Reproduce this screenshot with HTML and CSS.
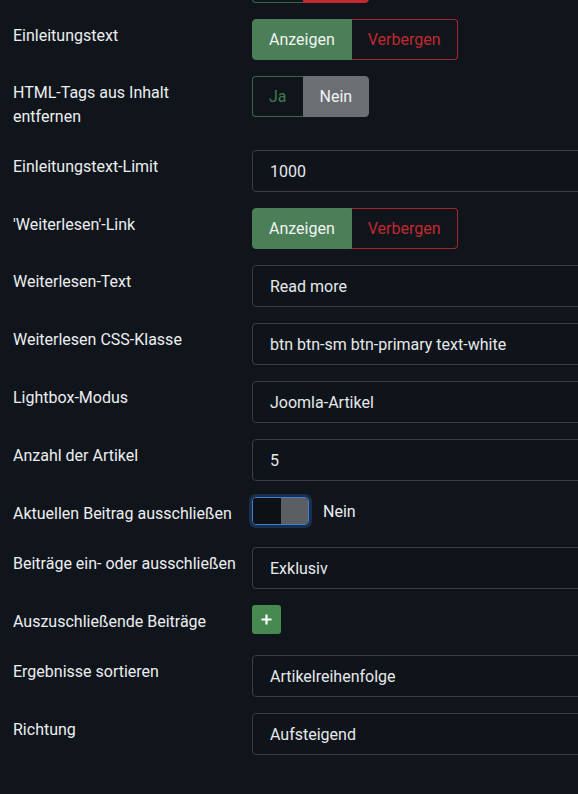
FILE: index.html
```html
<!DOCTYPE html>
<html lang="de">
<head>
<meta charset="utf-8">
<title>Optionen</title>
<link rel="stylesheet" href="styles.css">
</head>
<body>
<div class="form">
  <div class="row">
    <div class="lbl"></div>
    <div class="ctl">
      <div class="group">
        <span class="btn ja stub-ja"></span>
        <span class="btn nein-red stub-nein"></span>
      </div>
    </div>
  </div>
  <div class="row">
    <label class="lbl">Einleitungstext</label>
    <div class="ctl">
      <div class="group">
        <span class="btn show-on">Anzeigen</span>
        <span class="btn hide-off">Verbergen</span>
      </div>
    </div>
  </div>
  <div class="row">
    <label class="lbl">HTML-Tags aus Inhalt entfernen</label>
    <div class="ctl">
      <div class="group">
        <span class="btn ja">Ja</span>
        <span class="btn nein-grey">Nein</span>
      </div>
    </div>
  </div>
  <div class="row">
    <label class="lbl">Einleitungstext-Limit</label>
    <div class="ctl"><div class="input">1000</div></div>
  </div>
  <div class="row">
    <label class="lbl">'Weiterlesen'-Link</label>
    <div class="ctl">
      <div class="group">
        <span class="btn show-on">Anzeigen</span>
        <span class="btn hide-off">Verbergen</span>
      </div>
    </div>
  </div>
  <div class="row">
    <label class="lbl">Weiterlesen-Text</label>
    <div class="ctl"><div class="input">Read more</div></div>
  </div>
  <div class="row">
    <label class="lbl">Weiterlesen CSS-Klasse</label>
    <div class="ctl"><div class="input">btn btn-sm btn-primary text-white</div></div>
  </div>
  <div class="row">
    <label class="lbl">Lightbox-Modus</label>
    <div class="ctl"><div class="input">Joomla-Artikel</div></div>
  </div>
  <div class="row">
    <label class="lbl">Anzahl der Artikel</label>
    <div class="ctl"><div class="input">5</div></div>
  </div>
  <div class="row">
    <label class="lbl">Aktuellen Beitrag ausschließen</label>
    <div class="ctl switch-ctl">
      <span class="switch"><span class="sw-left"></span><span class="sw-right"></span></span>
      <span class="sw-text">Nein</span>
    </div>
  </div>
  <div class="row">
    <label class="lbl">Beiträge ein- oder ausschließen</label>
    <div class="ctl"><div class="input">Exklusiv</div></div>
  </div>
  <div class="row">
    <label class="lbl">Auszuschließende Beiträge</label>
    <div class="ctl">
      <span class="add">
        <svg width="13" height="13" viewBox="0 0 13 13"><path d="M6.5 1.5v10M1.5 6.5h10" stroke="#fff" stroke-width="2.2" fill="none"/></svg>
      </span>
    </div>
  </div>
  <div class="row">
    <label class="lbl">Ergebnisse sortieren</label>
    <div class="ctl"><div class="input">Artikelreihenfolge</div></div>
  </div>
  <div class="row">
    <label class="lbl">Richtung</label>
    <div class="ctl"><div class="input">Aufsteigend</div></div>
  </div>
</div>
</body>
</html>
```
FILE: styles.css
```css
html, body {
  margin: 0;
  padding: 0;
  background: #10151c;
  overflow: hidden;
}
body {
  font-family: Roboto, "Noto Sans", sans-serif;
  color: #e8eaed;
}
.form {
  width: 760px;
  margin-top: -38px;
  padding-left: 13px;
}
.row {
  display: grid;
  grid-template-columns: 239px 1fr;
  align-items: start;
  margin-bottom: 16px;
}
.lbl {
  font-size: 16px;
  line-height: 24px;
  padding: 5px 13px 5px 0;
  min-height: 24px;
  color: #eceef0;
}
.ctl {
  display: flex;
  align-items: flex-start;
}
.group {
  display: inline-flex;
  height: 41px;
}
.btn {
  display: flex;
  align-items: center;
  padding: 0 16px;
  font-size: 16px;
  box-sizing: border-box;
  height: 41px;
}
.group .btn:first-child { border-radius: 4px 0 0 4px; }
.group .btn:last-child { border-radius: 0 4px 4px 0; }
.stub-ja { width: 51px; }
.stub-nein { width: 66px; }
.ja {
  color: #3f7a4d;
  border: 1px solid #3d6447;
  border-right: 0;
}
.nein-grey {
  background: #6b6e72;
  color: #f2f3f4;
  border: 1px solid #6b6e72;
}
.nein-red {
  background: #c1292e;
  color: #fff;
  border: 1px solid #c1292e;
}
.show-on {
  background: #4a7f57;
  color: #f2f4f2;
  border: 1px solid #4a7f57;
}
.hide-off {
  color: #c1292e;
  border: 1px solid #a8262b;
  border-left: 0;
}
.input {
  box-sizing: border-box;
  width: 480px;
  height: 42px;
  border: 1px solid #3a3f46;
  border-radius: 4px;
  background: #0f141a;
  padding: 0 17px;
  display: flex;
  align-items: center;
  font-size: 16px;
  color: #e6e8ea;
}
.switch-ctl {
  align-items: center;
  height: 28px;
}
.switch {
  display: inline-flex;
  box-sizing: border-box;
  width: 57px;
  height: 28px;
  border: 1px solid #3d7fd0;
  border-radius: 4px;
  box-shadow: 0 0 0 3px #1a2f4c;
  overflow: hidden;
}
.sw-left { flex: 1; background: #0d1116; }
.sw-right { flex: 1; background: #5b5e62; }
.sw-text {
  margin-left: 14px;
  font-size: 16px;
  color: #eceef0;
}
.add {
  display: flex;
  align-items: center;
  justify-content: center;
  width: 29px;
  height: 29px;
  border-radius: 3px;
  background: #468a4f;
}
```
